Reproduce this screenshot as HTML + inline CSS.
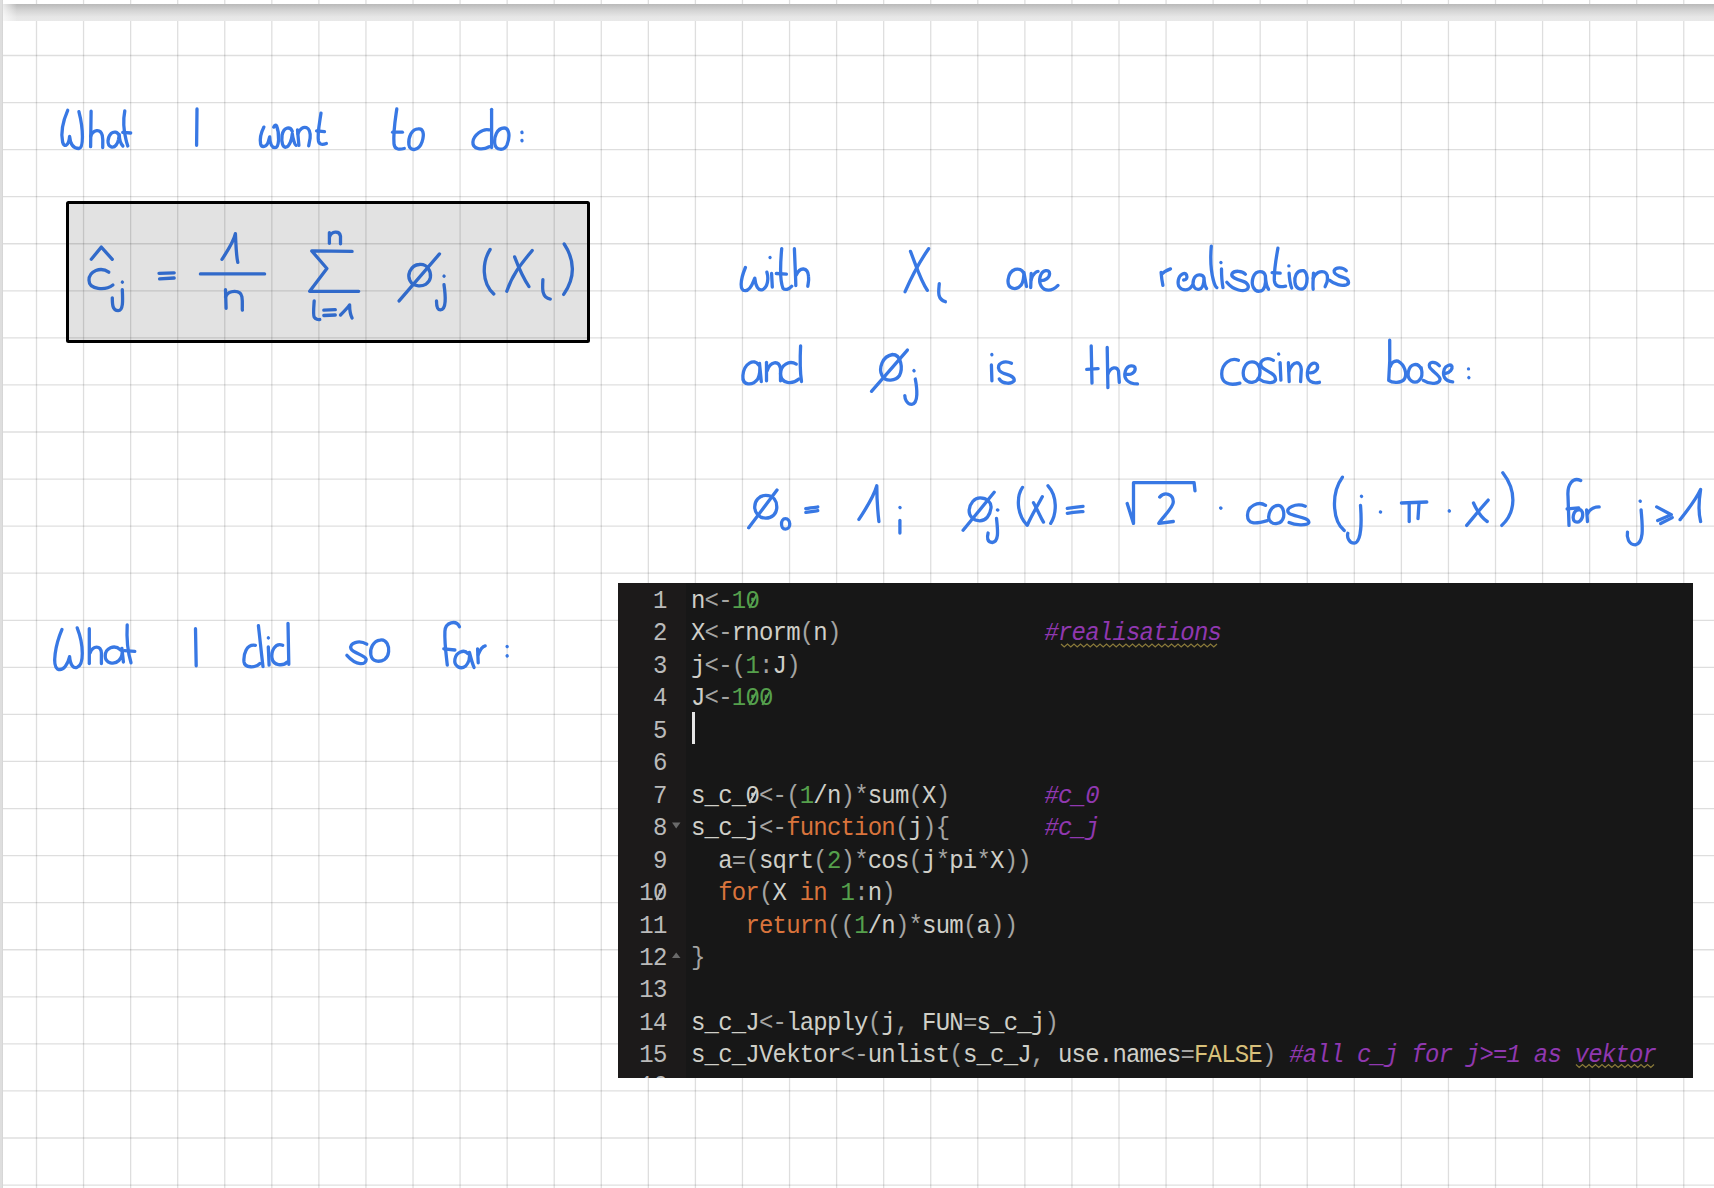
<!DOCTYPE html>
<html><head><meta charset="utf-8">
<style>
html,body{margin:0;padding:0;background:#fff;width:1714px;height:1188px;overflow:hidden;position:relative}
#grid{position:absolute;left:0;top:0}
#shadow{position:absolute;left:3px;top:4px;width:1711px;height:16.5px;background:linear-gradient(#b9b9b9,#d2d2d2 35%,#e6e6e6 75%,#e9e9e9);}
#shfade{position:absolute;left:3px;top:4px;width:14px;height:16.5px;background:linear-gradient(90deg,rgba(255,255,255,.7),rgba(255,255,255,0));}
#lstrip{position:absolute;left:0;top:0;width:3.4px;height:1188px;background:linear-gradient(90deg,#dedede 0,#dedede 1.6px,#d0d0d0 2.3px,#e4e4e4 2.9px,#fff 3.4px)}
#box{position:absolute;left:65.6px;top:201.3px;width:518.3px;height:135.4px;border:3.2px solid #000;border-radius:2.5px;background:rgba(0,0,0,.115)}
#code{position:absolute;left:618px;top:583px;width:1075px;height:495px;background:#171717;overflow:hidden}
#gutter{position:absolute;left:0;top:0;width:68px;height:495px;background:#1c1a1a}
.ln{position:absolute;left:73px;font-family:"Liberation Mono",monospace;font-size:24px;letter-spacing:-0.81px;line-height:32px;white-space:pre;color:#cfcfc8;transform:scaleY(1.06);transform-origin:0 24px}
.num{position:absolute;left:0.5px;font-family:"Liberation Mono",monospace;font-size:24px;letter-spacing:-0.81px;line-height:32px;white-space:pre;color:#bababa;text-align:right;width:48px;transform:scaleY(1.1);transform-origin:0 24px}
.g{color:#55a04c} .o{color:#d9743c} .c{color:#9038b0;font-style:italic} .y{color:#d8c07a} .d{color:#a4a4a2}
#hand{position:absolute;left:0;top:0}
.z{position:relative} .z::after{content:"";position:absolute;left:6.3px;top:7px;width:1.6px;height:13.5px;background:currentColor;transform:rotate(30deg)}
#hand path,#hand line,#hand ellipse,#hand circle{fill:none;stroke:#3878e4;stroke-width:3.3;stroke-linecap:round;stroke-linejoin:round}
</style></head><body>
<svg id="grid" width="1714" height="1188" viewBox="0 0 1714 1188"><g stroke="#000" stroke-opacity="0.13" stroke-width="1.3"><line x1="36.50" y1="0" x2="36.50" y2="1188"/>
<line x1="83.56" y1="0" x2="83.56" y2="1188"/>
<line x1="130.63" y1="0" x2="130.63" y2="1188"/>
<line x1="177.69" y1="0" x2="177.69" y2="1188"/>
<line x1="224.76" y1="0" x2="224.76" y2="1188"/>
<line x1="271.82" y1="0" x2="271.82" y2="1188"/>
<line x1="318.89" y1="0" x2="318.89" y2="1188"/>
<line x1="365.95" y1="0" x2="365.95" y2="1188"/>
<line x1="413.02" y1="0" x2="413.02" y2="1188"/>
<line x1="460.08" y1="0" x2="460.08" y2="1188"/>
<line x1="507.15" y1="0" x2="507.15" y2="1188"/>
<line x1="554.21" y1="0" x2="554.21" y2="1188"/>
<line x1="601.28" y1="0" x2="601.28" y2="1188"/>
<line x1="648.35" y1="0" x2="648.35" y2="1188"/>
<line x1="695.41" y1="0" x2="695.41" y2="1188"/>
<line x1="742.47" y1="0" x2="742.47" y2="1188"/>
<line x1="789.54" y1="0" x2="789.54" y2="1188"/>
<line x1="836.61" y1="0" x2="836.61" y2="1188"/>
<line x1="883.67" y1="0" x2="883.67" y2="1188"/>
<line x1="930.73" y1="0" x2="930.73" y2="1188"/>
<line x1="977.80" y1="0" x2="977.80" y2="1188"/>
<line x1="1024.87" y1="0" x2="1024.87" y2="1188"/>
<line x1="1071.93" y1="0" x2="1071.93" y2="1188"/>
<line x1="1118.99" y1="0" x2="1118.99" y2="1188"/>
<line x1="1166.06" y1="0" x2="1166.06" y2="1188"/>
<line x1="1213.12" y1="0" x2="1213.12" y2="1188"/>
<line x1="1260.19" y1="0" x2="1260.19" y2="1188"/>
<line x1="1307.25" y1="0" x2="1307.25" y2="1188"/>
<line x1="1354.32" y1="0" x2="1354.32" y2="1188"/>
<line x1="1401.38" y1="0" x2="1401.38" y2="1188"/>
<line x1="1448.45" y1="0" x2="1448.45" y2="1188"/>
<line x1="1495.51" y1="0" x2="1495.51" y2="1188"/>
<line x1="1542.58" y1="0" x2="1542.58" y2="1188"/>
<line x1="1589.64" y1="0" x2="1589.64" y2="1188"/>
<line x1="1636.71" y1="0" x2="1636.71" y2="1188"/>
<line x1="1683.77" y1="0" x2="1683.77" y2="1188"/>
<line x1="0" y1="8.44" x2="1714" y2="8.44"/>
<line x1="0" y1="55.50" x2="1714" y2="55.50"/>
<line x1="0" y1="102.56" x2="1714" y2="102.56"/>
<line x1="0" y1="149.63" x2="1714" y2="149.63"/>
<line x1="0" y1="196.69" x2="1714" y2="196.69"/>
<line x1="0" y1="243.76" x2="1714" y2="243.76"/>
<line x1="0" y1="290.82" x2="1714" y2="290.82"/>
<line x1="0" y1="337.89" x2="1714" y2="337.89"/>
<line x1="0" y1="384.95" x2="1714" y2="384.95"/>
<line x1="0" y1="432.02" x2="1714" y2="432.02"/>
<line x1="0" y1="479.08" x2="1714" y2="479.08"/>
<line x1="0" y1="526.15" x2="1714" y2="526.15"/>
<line x1="0" y1="573.21" x2="1714" y2="573.21"/>
<line x1="0" y1="620.28" x2="1714" y2="620.28"/>
<line x1="0" y1="667.35" x2="1714" y2="667.35"/>
<line x1="0" y1="714.41" x2="1714" y2="714.41"/>
<line x1="0" y1="761.47" x2="1714" y2="761.47"/>
<line x1="0" y1="808.54" x2="1714" y2="808.54"/>
<line x1="0" y1="855.61" x2="1714" y2="855.61"/>
<line x1="0" y1="902.67" x2="1714" y2="902.67"/>
<line x1="0" y1="949.73" x2="1714" y2="949.73"/>
<line x1="0" y1="996.80" x2="1714" y2="996.80"/>
<line x1="0" y1="1043.87" x2="1714" y2="1043.87"/>
<line x1="0" y1="1090.93" x2="1714" y2="1090.93"/>
<line x1="0" y1="1137.99" x2="1714" y2="1137.99"/>
<line x1="0" y1="1185.06" x2="1714" y2="1185.06"/></g></svg>
<div id="shadow"></div><div id="shfade"></div><div id="lstrip"></div>
<div id="code"><div id="gutter"></div>
<div class="num" style="top:3.00px">1</div>
<div class="ln" style="top:3.00px">n<span class="d">&lt;</span><span class="d">-</span><span class="g">1<span class="z">0</span></span></div>
<div class="num" style="top:35.45px">2</div>
<div class="ln" style="top:35.45px">X<span class="d">&lt;</span><span class="d">-</span>rnorm<span class="d">(</span>n<span class="d">)</span>               <span class="c">#realisations</span></div>
<div class="num" style="top:67.90px">3</div>
<div class="ln" style="top:67.90px">j<span class="d">&lt;</span><span class="d">-</span><span class="d">(</span><span class="g">1</span><span class="d">:</span>J<span class="d">)</span></div>
<div class="num" style="top:100.35px">4</div>
<div class="ln" style="top:100.35px">J<span class="d">&lt;</span><span class="d">-</span><span class="g">1<span class="z">0</span><span class="z">0</span></span></div>
<div class="num" style="top:132.80px">5</div>
<div class="ln" style="top:132.80px"></div>
<div class="num" style="top:165.25px">6</div>
<div class="ln" style="top:165.25px"></div>
<div class="num" style="top:197.70px">7</div>
<div class="ln" style="top:197.70px">s_c_<span class="z">0</span><span class="d">&lt;</span><span class="d">-</span><span class="d">(</span><span class="g">1</span>/n<span class="d">)</span><span class="d">*</span>sum<span class="d">(</span>X<span class="d">)</span>       <span class="c">#c_0</span></div>
<div class="num" style="top:230.15px">8</div>
<div class="ln" style="top:230.15px">s_c_j<span class="d">&lt;</span><span class="d">-</span><span class="o">function</span><span class="d">(</span>j<span class="d">)</span><span class="d">{</span>       <span class="c">#c_j</span></div>
<div class="num" style="top:262.60px">9</div>
<div class="ln" style="top:262.60px">  a<span class="d">=</span><span class="d">(</span>sqrt<span class="d">(</span><span class="g">2</span><span class="d">)</span><span class="d">*</span>cos<span class="d">(</span>j<span class="d">*</span>pi<span class="d">*</span>X<span class="d">)</span><span class="d">)</span></div>
<div class="num" style="top:295.05px">1<span class="z">0</span></div>
<div class="ln" style="top:295.05px">  <span class="o">for</span><span class="d">(</span>X <span class="o">in</span> <span class="g">1</span><span class="d">:</span>n<span class="d">)</span></div>
<div class="num" style="top:327.50px">11</div>
<div class="ln" style="top:327.50px">    <span class="o">return</span><span class="d">(</span><span class="d">(</span><span class="g">1</span>/n<span class="d">)</span><span class="d">*</span>sum<span class="d">(</span>a<span class="d">)</span><span class="d">)</span></div>
<div class="num" style="top:359.95px">12</div>
<div class="ln" style="top:359.95px"><span class="d">}</span></div>
<div class="num" style="top:392.40px">13</div>
<div class="ln" style="top:392.40px"></div>
<div class="num" style="top:424.85px">14</div>
<div class="ln" style="top:424.85px">s_c_J<span class="d">&lt;</span><span class="d">-</span>lapply<span class="d">(</span>j<span class="d">,</span> FUN<span class="d">=</span>s_c_j<span class="d">)</span></div>
<div class="num" style="top:457.30px">15</div>
<div class="ln" style="top:457.30px">s_c_JVektor<span class="d">&lt;</span><span class="d">-</span>unlist<span class="d">(</span>s_c_J<span class="d">,</span> use.names<span class="d">=</span><span class="y">FALSE</span><span class="d">)</span> <span class="c">#all c_j for j&gt;=1 as vektor</span></div>
<div class="num" style="top:487.75px">16</div>
<div class="ln" style="top:487.75px"></div>
<div style="position:absolute;left:74px;top:129px;width:3px;height:32px;background:#e6e6e6"></div>
<svg style="position:absolute;left:0;top:0" width="1075" height="495"><polygon points="54,239.5 62.5,239.5 58.2,245.5" fill="#6a6a6a"/><polygon points="54,375 62.5,375 58.2,369.5" fill="#6a6a6a"/>
<polyline points="443.0,61.0 446.2,64.0 449.5,61.0 452.8,64.0 456.0,61.0 459.2,64.0 462.5,61.0 465.8,64.0 469.0,61.0 472.2,64.0 475.5,61.0 478.8,64.0 482.0,61.0 485.2,64.0 488.5,61.0 491.8,64.0 495.0,61.0 498.2,64.0 501.5,61.0 504.8,64.0 508.0,61.0 511.2,64.0 514.5,61.0 517.8,64.0 521.0,61.0 524.2,64.0 527.5,61.0 530.8,64.0 534.0,61.0 537.2,64.0 540.5,61.0 543.8,64.0 547.0,61.0 550.2,64.0 553.5,61.0 556.8,64.0 560.0,61.0 563.2,64.0 566.5,61.0 569.8,64.0 573.0,61.0 576.2,64.0 579.5,61.0 582.8,64.0 586.0,61.0 589.2,64.0 592.5,61.0 595.8,64.0 599.0,61.0" fill="none" stroke="#8a7a3a" stroke-width="1.2"/>
<polyline points="958.0,481.5 961.2,484.5 964.5,481.5 967.8,484.5 971.0,481.5 974.2,484.5 977.5,481.5 980.8,484.5 984.0,481.5 987.2,484.5 990.5,481.5 993.8,484.5 997.0,481.5 1000.2,484.5 1003.5,481.5 1006.8,484.5 1010.0,481.5 1013.2,484.5 1016.5,481.5 1019.8,484.5 1023.0,481.5 1026.2,484.5 1029.5,481.5 1032.8,484.5 1036.0,481.5" fill="none" stroke="#8a7a3a" stroke-width="1.2"/>
</svg>
</div>
<svg id="hand" width="1714" height="1188" viewBox="0 0 1714 1188">
<path d="M 67.7 110.3 C 64.0 118.7 60.3 130.8 62.6 142.0 C 64.0 147.6 68.7 146.7 69.6 136.4 C 70.1 142.0 72.4 148.5 78.9 148.5 C 83.6 148.1 83.6 129.9 78.9 111.7"/>
<path d="M 91.1 111.2 L 90.6 146.7"/>
<path d="M 90.6 136.4 C 92.9 129.9 100.4 128.0 102.3 135.5 C 103.2 140.1 102.7 144.8 102.7 147.6"/>
<path d="M 118.9 135.3 C 117.7 131.9 113.9 131.1 111.0 133.6 C 107.6 137.0 106.3 145.0 111.3 146.9 C 115.2 147.9 117.7 143.7 118.5 139.5 C 118.9 137.0 119.2 135.3 119.2 134.4 C 119.4 139.5 120.6 143.7 122.9 146.0"/>
<path d="M 124.8 110.9 C 123.3 118.7 123.7 130.8 126.1 140.1 C 126.7 142.9 127.5 144.8 127.8 146.0"/>
<path d="M 122.7 132.4 L 130.7 133.0"/>
<path d="M 197.0 108.9 L 196.6 145.3"/>
<path d="M 263.9 127.1 C 261.1 132.7 259.7 139.3 260.6 143.9 C 261.5 147.7 266.7 147.7 268.5 141.1 C 269.0 139.3 269.5 137.4 269.7 136.9 C 269.9 141.1 270.9 147.7 275.1 147.7 C 279.3 147.7 279.7 133.7 276.5 125.7 C 275.5 124.3 274.6 125.7 273.7 127.1"/>
<path d="M 292.3 131.3 C 290.5 126.7 283.9 126.2 282.1 135.1 C 281.1 143.0 283.0 147.7 285.8 147.2 C 289.5 146.7 291.9 139.3 292.3 133.7 C 292.8 138.3 294.7 144.9 296.1 145.3"/>
<path d="M 297.5 129.9 L 298.9 145.3"/>
<path d="M 297.9 133.7 C 299.8 128.5 303.5 126.7 306.3 127.6 C 309.6 129.0 310.5 133.7 310.1 138.3 L 308.7 145.8"/>
<path d="M 321.0 113.1 C 319.4 124.3 317.1 133.7 318.5 141.1 C 319.4 144.9 322.7 144.9 326.4 143.5"/>
<path d="M 316.6 130.9 L 324.5 131.6"/>
<path d="M 396.8 108.9 C 395.4 118.7 393.1 130.8 394.0 143.9 C 394.5 150.4 400.5 149.5 404.3 148.5"/>
<path d="M 392.6 132.2 L 402.4 132.2"/>
<path d="M 418.3 128.9 C 411.7 128.9 408.0 137.3 408.9 144.8 C 409.9 152.3 419.2 150.4 422.0 142.0 C 424.8 133.6 422.9 128.0 418.3 128.9"/>
<path d="M 489.2 129.9 C 482.7 128.0 473.3 135.5 472.9 142.0 C 472.4 149.5 482.7 150.4 489.2 146.7"/>
<path d="M 491.6 109.3 L 491.6 147.6"/>
<path d="M 504.2 128.0 C 496.7 128.0 493.9 137.3 494.8 143.9 C 495.8 150.4 504.2 151.3 507.0 144.8 C 510.7 135.5 508.8 128.0 504.2 128.0"/>
<path d="M 521.9 132.2 L 522.0 132.7"/>
<path d="M 521.9 140.3 L 522.0 140.8"/>
<path d="M 91.3 259.3 L 101.3 247.1 L 112.3 259.3"/>
<path d="M 108.8 272.2 C 100.7 266.3 89.0 271.0 89.0 280.3 C 89.0 289.7 105.3 290.8 112.9 285.0"/>
<path d="M 122.3 289.7 C 122.8 300.2 123.4 310.7 118.2 310.7 C 112.3 310.7 112.3 303.7 112.3 297.8"/>
<path d="M 159.0 273.3 L 174.2 272.8"/>
<path d="M 159.6 278.9 L 174.2 278.0"/>
<path d="M 222.0 259.3 C 226.7 252.3 233.7 241.8 235.4 233.7 C 236.0 244.2 236.0 254.7 237.8 262.3"/>
<path d="M 200.4 273.9 L 264.6 273.9"/>
<path d="M 225.5 289.7 L 226.1 308.3"/>
<path d="M 225.5 296.7 C 229.0 289.7 240.7 289.7 241.9 296.7 C 243.0 303.7 241.9 308.3 242.4 310.1"/>
<path d="M 122.3 282.1 L 122.4 282.2"/>
<path d="M 329.4 243.3 L 329.4 232.7"/>
<path d="M 329.6 236.7 C 331.4 231.2 339.5 230.2 340.5 236.2 L 340.5 243.8"/>
<path d="M 352.1 251.4 L 311.7 250.9 L 326.9 268.5 L 309.7 291.3 L 358.7 291.3"/>
<path d="M 314.2 300.9 C 313.7 307.9 313.0 315.0 314.2 317.2 C 315.5 319.2 318.3 320.1 319.8 319.5"/>
<path d="M 323.8 310.2 L 335.3 309.7"/>
<path d="M 323.8 315.5 L 335.3 315.0"/>
<path d="M 340.5 315.0 C 343.5 312.0 347.6 307.9 349.6 304.9 C 349.6 309.9 350.6 315.0 352.1 318.0"/>
<path d="M 419.3 264.5 C 427.4 263.5 431.4 271.6 430.4 277.6 C 429.4 283.7 423.3 286.7 417.3 285.7 C 410.2 284.7 407.2 277.6 409.7 271.6 C 412.2 266.5 416.3 264.5 419.3 264.5"/>
<path d="M 399.1 300.9 L 439.5 253.9"/>
<path d="M 444.0 284.7 C 445.6 295.8 446.6 309.9 440.5 309.9 C 436.5 309.9 436.5 302.9 436.5 300.9"/>
<path d="M 444.0 276.1 L 444.1 276.2"/>
<path d="M 490.1 249.5 C 482.2 262.0 481.3 282.4 493.8 294.0"/>
<path d="M 514.6 256.9 C 518.3 266.7 523.0 277.8 529.0 286.6"/>
<path d="M 532.2 250.5 C 523.0 262.0 512.8 273.1 506.8 291.2"/>
<path d="M 542.9 279.6 C 542.4 288.0 541.5 298.1 550.3 299.1"/>
<path d="M 564.2 244.0 C 574.8 260.2 575.7 276.9 563.7 294.4"/>
<path d="M 745.4 267.5 C 740.1 280.3 739.4 291.0 745.4 290.7 C 751.5 290.3 753.5 280.3 754.8 278.2 C 755.5 285.6 758.2 291.7 762.9 289.4 C 767.6 287.0 768.9 278.9 766.9 272.2"/>
<path d="M 771.6 273.5 L 772.3 287.0"/>
<path d="M 781.7 248.7 C 780.3 264.2 779.6 280.3 783.0 288.3 C 785.0 290.3 789.0 289.6 791.7 286.3"/>
<path d="M 776.3 273.5 L 786.4 274.2"/>
<path d="M 794.4 248.7 C 795.1 266.8 795.8 280.3 795.8 285.6"/>
<path d="M 796.4 274.9 C 799.8 266.8 807.8 266.8 808.5 276.2 C 809.2 281.6 807.8 284.3 807.8 286.3"/>
<path d="M 910.5 251.4 C 916.5 266.8 920.5 280.3 927.3 290.3"/>
<path d="M 928.6 248.7 C 917.9 264.2 911.2 277.6 905.1 291.7"/>
<path d="M 939.3 283.6 C 938.7 291.0 936.7 299.0 945.4 301.7"/>
<path d="M 770.0 257.4 L 770.1 257.6"/>
<path d="M 1023.9 273.4 C 1020.2 266.0 1009.7 268.1 1008.1 279.7 C 1007.1 289.1 1016.0 291.2 1021.3 284.9 C 1023.4 281.8 1023.9 276.5 1023.9 272.3 L 1026.5 286.5"/>
<path d="M 1031.2 273.4 L 1030.7 287.5"/>
<path d="M 1031.2 279.7 C 1032.8 273.4 1037.0 271.3 1038.1 271.3"/>
<path d="M 1041.2 280.7 C 1045.4 280.7 1049.6 277.6 1049.6 273.4 C 1049.6 269.2 1042.3 269.2 1040.2 276.5 C 1038.1 283.9 1042.3 290.2 1048.6 290.2 C 1052.8 290.2 1055.9 287.5 1058.0 285.4"/>
<path d="M 1161.1 272.4 C 1161.4 276.5 1162.0 281.2 1162.9 285.3"/>
<path d="M 1161.7 274.2 C 1163.8 271.8 1167.3 270.1 1170.5 268.9"/>
<path d="M 1183.6 280.0 C 1186.5 280.0 1187.7 277.7 1186.5 274.8 C 1184.8 271.8 1179.5 274.2 1178.3 280.0 C 1177.2 285.8 1180.1 289.9 1185.3 289.9 C 1188.3 289.9 1191.2 287.0 1192.3 285.3"/>
<path d="M 1204.0 277.7 C 1202.8 274.2 1195.8 273.0 1193.5 280.0 C 1191.8 285.8 1195.3 289.9 1198.8 289.3 C 1202.3 288.8 1204.0 283.5 1204.0 277.7 C 1204.3 283.5 1205.2 287.0 1206.6 288.5"/>
<path d="M 1211.3 246.2 C 1210.4 256.7 1211.0 271.3 1213.3 280.0 C 1214.5 284.7 1215.7 287.0 1216.8 287.6"/>
<path d="M 1221.5 268.9 C 1221.5 275.3 1222.1 282.9 1223.0 287.6"/>
<path d="M 1245.4 274.2 C 1242.5 270.7 1234.3 270.1 1232.0 273.6 C 1230.3 277.1 1236.7 279.4 1242.5 281.2 C 1248.3 282.9 1249.5 287.0 1247.2 289.3 C 1244.3 291.7 1233.8 291.1 1226.8 282.3"/>
<path d="M 1220.9 262.5 L 1221.0 262.6"/>
<path d="M 1265.4 275.8 C 1264.1 270.7 1256.4 269.4 1253.2 277.1 C 1250.6 284.8 1253.9 291.8 1259.6 291.2 C 1264.8 290.6 1266.0 283.5 1265.4 275.8 C 1265.7 282.2 1266.7 286.7 1268.6 289.3"/>
<path d="M 1277.9 248.2 C 1276.3 257.8 1273.7 270.7 1274.4 280.9 C 1275.0 286.7 1279.5 287.4 1285.6 286.1"/>
<path d="M 1272.1 272.6 L 1280.2 273.2"/>
<path d="M 1289.1 273.2 C 1289.5 279.7 1290.4 284.8 1291.7 288.0"/>
<path d="M 1303.3 270.7 C 1296.2 270.0 1294.3 277.1 1294.9 282.2 C 1295.6 288.6 1300.1 289.9 1303.3 288.6 C 1307.1 286.7 1307.8 278.4 1306.5 274.5 C 1305.2 271.3 1303.9 270.4 1303.3 270.7"/>
<path d="M 1313.5 273.2 C 1313.2 279.7 1312.6 284.8 1313.2 289.3"/>
<path d="M 1313.2 278.4 C 1315.5 272.6 1320.6 270.7 1324.4 272.0 C 1327.7 273.2 1327.7 278.4 1327.0 282.2 L 1325.1 286.7"/>
<path d="M 1346.3 270.7 C 1343.1 266.8 1335.4 266.8 1334.1 270.7 C 1333.4 274.5 1339.2 276.4 1343.7 277.7 C 1348.8 279.0 1350.1 283.5 1346.3 284.8 C 1341.8 286.1 1334.7 284.8 1329.6 280.3"/>
<path d="M 1288.8 265.9 L 1288.9 265.9"/>
<path d="M 758.6 365.0 C 754.3 358.0 743.8 363.3 742.9 375.5 C 742.0 386.0 752.5 386.0 757.8 379.0 C 759.5 375.5 760.4 370.3 759.5 363.3 L 761.3 381.6"/>
<path d="M 766.5 362.4 L 766.5 380.8"/>
<path d="M 767.4 370.3 C 770.0 361.5 778.8 359.8 780.5 368.5 L 780.5 380.8"/>
<path d="M 796.3 364.1 C 789.3 359.8 780.5 365.0 780.5 373.8 C 780.5 384.3 792.8 384.3 798.9 379.0"/>
<path d="M 800.6 345.8 C 799.8 361.5 800.6 375.5 801.5 381.6"/>
<path d="M 892.5 354.5 C 901.3 354.5 903.0 368.5 899.5 375.5 C 896.0 380.8 885.5 382.5 882.0 375.5 C 878.5 368.5 882.0 356.3 892.5 354.5"/>
<path d="M 871.5 391.3 L 907.4 350.1"/>
<path d="M 915.3 379.0 C 917.0 387.8 918.8 403.5 911.8 404.4 C 906.5 404.4 904.8 398.3 904.8 395.6"/>
<path d="M 991.4 365.0 L 991.9 380.8"/>
<path d="M 1011.5 363.3 C 1004.5 359.8 995.8 363.3 999.3 370.3 C 1002.8 375.5 1015.0 373.8 1014.2 380.8 C 1011.5 384.3 1002.8 384.3 999.3 379.0"/>
<path d="M 913.9 370.6 L 914.1 370.8"/>
<path d="M 991.8 354.5 L 991.9 354.7"/>
<path d="M 1091.2 345.9 L 1092.0 383.1"/>
<path d="M 1086.7 369.4 L 1098.1 368.7"/>
<path d="M 1107.2 347.4 L 1107.9 387.6"/>
<path d="M 1107.9 374.0 C 1111.0 366.4 1117.0 366.4 1118.5 371.0 L 1119.3 382.3"/>
<path d="M 1126.1 374.0 C 1130.7 375.5 1135.2 372.5 1135.2 368.7 C 1135.2 364.9 1127.6 364.1 1125.4 371.0 C 1123.1 378.5 1127.6 383.9 1137.5 383.9"/>
<path d="M 1238.4 360.3 C 1230.8 357.3 1221.7 363.4 1221.7 374.0 C 1221.7 383.1 1229.3 386.1 1239.9 383.1"/>
<path d="M 1252.0 361.9 C 1244.4 361.9 1241.4 372.5 1244.4 378.5 C 1249.0 384.6 1258.1 383.1 1259.6 375.5 C 1261.1 367.9 1258.1 361.9 1252.0 361.9"/>
<path d="M 1273.3 360.3 C 1265.7 355.8 1256.6 361.9 1262.6 367.9 C 1268.7 372.5 1276.3 374.0 1275.5 380.1 C 1273.3 383.9 1264.2 383.1 1258.1 378.5"/>
<path d="M 1280.1 362.6 L 1280.9 380.1"/>
<path d="M 1288.4 362.6 L 1289.2 381.6"/>
<path d="M 1289.2 371.0 C 1293.0 360.3 1300.6 360.3 1301.3 369.4 L 1300.6 381.6"/>
<path d="M 1308.2 372.5 C 1314.2 374.0 1318.8 369.4 1317.3 364.9 C 1314.2 360.3 1308.2 364.9 1307.4 372.5 C 1306.6 381.6 1312.7 383.9 1319.5 382.3"/>
<path d="M 1278.6 354.0 L 1278.7 354.1"/>
<path d="M 1389.7 340.2 C 1390.1 354.5 1389.7 368.5 1388.7 380.4 C 1392.5 383.2 1401.6 383.2 1404.4 379.0 C 1407.2 374.1 1405.1 365.0 1398.1 361.2 C 1393.9 360.1 1391.1 363.6 1390.4 366.4"/>
<path d="M 1421.2 369.2 C 1418.4 362.2 1410.0 362.9 1408.3 372.0 C 1406.9 380.4 1414.2 384.6 1419.1 380.4 C 1421.9 378.3 1422.6 373.4 1421.2 367.8"/>
<path d="M 1439.4 365.7 C 1435.2 360.8 1427.5 361.5 1429.6 367.1 C 1431.7 371.3 1439.4 374.8 1440.1 379.0 C 1439.4 383.9 1431.0 385.3 1423.3 380.4"/>
<path d="M 1445.7 373.4 C 1449.9 372.7 1452.7 369.2 1452.0 366.4 C 1450.6 363.6 1445.7 365.7 1444.3 369.2 C 1442.2 375.5 1444.3 381.1 1452.7 381.8"/>
<path d="M 1468.5 368.9 L 1468.5 368.9"/>
<path d="M 1468.8 377.6 L 1468.9 377.7"/>
<path d="M 765.7 495.4 C 773.9 495.4 776.8 501.5 776.8 507.0 C 776.8 514.1 771.8 518.1 765.7 518.1 C 759.2 518.1 754.7 513.1 754.7 507.0 C 754.7 500.5 759.2 495.4 765.7 495.4"/>
<path d="M 748.7 527.8 L 777.0 490.0"/>
<path d="M 785.4 518.7 C 790.7 518.7 791.7 528.8 785.4 529.2 C 780.2 529.2 780.2 518.7 785.4 518.7"/>
<path d="M 805.8 508.6 C 809.6 507.8 813.8 507.4 817.8 507.0"/>
<path d="M 805.8 512.4 C 809.6 511.6 813.8 511.2 817.8 510.7"/>
<path d="M 858.9 519.4 C 865.2 509.9 873.6 497.3 876.8 485.8 C 876.8 499.4 877.8 512.0 878.9 521.5"/>
<path d="M 899.9 520.4 L 899.9 533.0"/>
<path d="M 980.1 497.9 C 987.0 497.9 991.7 502.6 991.0 507.8 C 990.2 515.2 986.0 520.8 979.7 520.8 C 973.4 520.8 968.6 516.2 969.2 509.9 C 969.8 503.6 974.4 497.9 980.1 497.9"/>
<path d="M 963.1 530.3 L 994.2 492.3"/>
<path d="M 996.5 518.3 C 997.5 528.8 999.6 541.4 992.3 542.5 C 987.0 542.5 987.0 537.2 988.1 533.0"/>
<path d="M 1022.5 487.4 C 1016.4 496.3 1016.4 513.7 1026.9 525.0"/>
<path d="M 1033.5 502.8 C 1037.5 509.9 1040.6 517.3 1043.5 522.1"/>
<path d="M 1042.3 496.7 C 1037.5 505.7 1031.1 516.2 1027.4 525.0"/>
<path d="M 1048.0 485.8 C 1057.6 496.3 1056.8 513.7 1050.7 523.3"/>
<path d="M 1067.3 508.4 C 1073.2 507.4 1078.4 506.8 1083.0 506.3"/>
<path d="M 1067.3 513.3 C 1073.2 512.4 1078.4 512.0 1083.0 511.6"/>
<path d="M 899.9 507.4 L 900.1 507.6"/>
<path d="M 997.5 509.9 L 997.8 510.1"/>
<path d="M 1127.2 503.5 L 1133.5 523.4 L 1133.5 482.7 L 1194.1 482.7 L 1195.0 490.8"/>
<path d="M 1159.7 497.1 C 1164.3 491.7 1173.3 493.5 1173.3 501.7 C 1173.3 508.0 1162.5 517.0 1158.8 523.4 L 1173.3 521.5"/>
<path d="M 1265.5 505.3 C 1258.3 500.7 1247.5 506.2 1247.5 515.2 C 1247.5 524.3 1254.7 524.3 1267.4 520.6"/>
<path d="M 1278.2 505.3 C 1271.0 505.3 1267.4 515.2 1269.2 519.7 C 1272.8 526.1 1281.8 524.3 1283.6 517.0 C 1284.5 509.8 1281.8 505.3 1278.2 505.3"/>
<path d="M 1305.3 506.2 C 1296.3 502.6 1283.6 508.0 1289.1 513.4 C 1294.5 517.0 1308.9 517.0 1308.9 522.5 C 1307.1 526.1 1294.5 525.2 1289.1 522.5"/>
<path d="M 1342.4 477.2 C 1330.7 493.5 1332.5 520.6 1344.2 530.6"/>
<path d="M 1360.5 505.3 C 1361.4 517.0 1362.3 542.3 1354.2 543.2 C 1348.7 543.2 1346.9 536.9 1347.8 533.3"/>
<path d="M 1220.7 508.0 L 1220.9 508.2"/>
<path d="M 1361.4 496.2 L 1361.6 496.4"/>
<path d="M 1380.4 512.0 L 1380.6 512.1"/>
<path d="M 1401.4 503.0 L 1426.8 502.0"/>
<path d="M 1409.2 504.0 L 1409.2 521.5"/>
<path d="M 1419.0 503.0 L 1418.0 518.6"/>
<path d="M 1473.5 503.0 C 1477.4 511.8 1481.3 517.6 1487.2 521.5"/>
<path d="M 1488.2 500.1 C 1479.4 509.8 1471.6 519.6 1466.7 525.4"/>
<path d="M 1502.8 472.8 C 1516.4 490.3 1516.4 511.8 1501.8 525.4"/>
<path d="M 1580.7 480.6 C 1572.9 476.7 1567.1 484.5 1568.0 496.2 L 1569.0 525.4"/>
<path d="M 1567.1 508.8 L 1578.8 507.9"/>
<path d="M 1578.8 509.8 C 1572.9 509.8 1571.9 519.6 1574.9 521.5 C 1578.8 523.5 1582.7 519.6 1582.7 514.7 C 1582.7 510.8 1580.7 509.4 1578.8 509.8"/>
<path d="M 1586.6 509.8 L 1587.5 521.5"/>
<path d="M 1587.5 513.7 C 1590.5 507.9 1596.3 506.9 1599.2 506.9"/>
<path d="M 1641.1 509.8 C 1642.1 523.5 1645.0 542.9 1635.3 544.9 C 1628.5 544.9 1626.5 537.1 1627.5 532.2"/>
<path d="M 1656.7 506.9 L 1671.3 514.7 L 1657.7 520.5"/>
<path d="M 1660.6 523.5 L 1672.3 517.6"/>
<path d="M 1680.1 519.6 C 1687.9 509.8 1695.7 500.1 1700.6 489.4 C 1698.6 502.0 1698.6 513.7 1700.6 521.5"/>
<path d="M 1449.2 510.8 L 1449.4 511.0"/>
<path d="M 1640.1 501.1 L 1640.3 501.2"/>
<path d="M 62.0 629.4 C 55.2 645.3 52.1 665.1 57.4 668.9 C 63.5 671.9 68.1 663.5 69.6 656.7 C 70.3 665.1 73.4 668.9 77.2 667.3 C 84.0 665.1 84.0 645.3 77.2 627.9"/>
<path d="M 89.3 628.7 L 89.3 663.5"/>
<path d="M 90.1 652.9 C 93.1 645.3 100.7 645.3 101.4 652.9 L 101.4 663.5"/>
<path d="M 120.4 649.9 C 114.3 643.8 105.2 648.4 105.2 656.0 C 105.2 663.5 114.3 665.1 118.9 660.5 C 121.9 657.5 122.7 652.9 121.9 648.4 L 123.4 662.0"/>
<path d="M 127.2 624.9 C 126.5 637.8 128.0 652.9 131.0 662.8"/>
<path d="M 124.2 650.6 L 134.8 651.4"/>
<path d="M 195.5 628.7 L 196.2 665.8"/>
<path d="M 255.4 645.3 C 246.3 643.8 243.3 654.4 244.0 662.0 C 244.8 668.1 255.4 668.1 260.0 663.5"/>
<path d="M 258.4 625.6 C 260.0 639.3 261.5 654.4 263.0 666.6"/>
<path d="M 268.3 646.9 L 269.1 665.1"/>
<path d="M 282.7 645.3 C 275.1 642.3 270.6 651.4 272.1 659.0 C 273.6 665.1 282.7 666.6 287.3 662.0"/>
<path d="M 288.0 623.3 L 288.8 664.3"/>
<path d="M 268.3 637.8 L 268.4 637.9"/>
<path d="M 366.8 644.2 C 359.2 639.5 348.7 643.0 351.0 648.8 C 353.3 653.5 365.0 654.7 366.2 659.3 C 366.2 665.2 356.8 666.3 346.9 655.3"/>
<path d="M 380.2 640.1 C 373.2 640.7 369.7 648.8 370.8 654.7 C 372.0 661.7 379.0 662.8 384.8 659.3 C 389.5 655.8 389.5 647.7 387.2 643.6 C 385.4 640.7 382.5 639.5 380.2 640.1"/>
<path d="M 459.5 626.7 C 456.0 619.7 445.5 622.0 444.9 631.3 C 444.4 643.0 446.1 653.5 447.3 665.2"/>
<path d="M 443.8 648.8 L 454.9 650.0"/>
<path d="M 467.7 653.5 C 464.2 648.8 456.0 652.3 454.9 659.3 C 453.7 666.3 460.7 669.8 465.4 666.3 C 468.9 662.8 470.0 657.0 469.4 652.3 C 471.2 659.3 472.4 664.0 474.1 667.5"/>
<path d="M 477.6 648.8 L 478.2 662.8"/>
<path d="M 478.2 654.7 C 480.5 648.8 482.9 646.5 485.2 645.9"/>
<path d="M 507.1 646.5 L 507.2 646.6"/>
<path d="M 507.1 655.8 L 507.2 656.0"/>
</svg>
<div id="box"></div>
</body></html>
